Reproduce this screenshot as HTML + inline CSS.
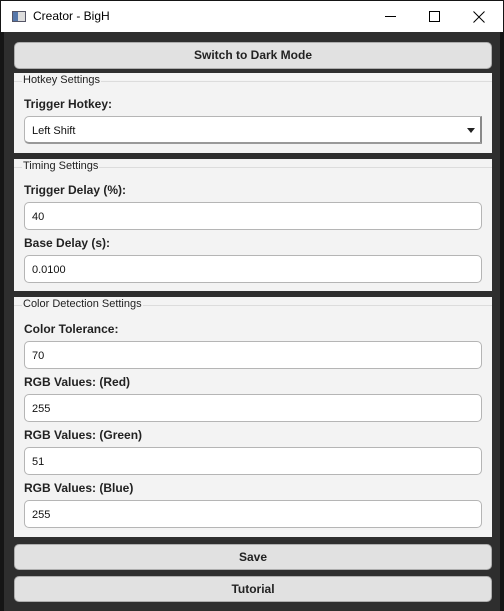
<!DOCTYPE html>
<html><head><style>
*{box-sizing:border-box;margin:0;padding:0}
body{width:504px;height:611px;background:#151515;position:relative;overflow:hidden;font-family:"Liberation Sans",sans-serif;font-size:12px;color:#000}
.tb{position:absolute;left:1px;top:1px;width:502px;height:31px;background:#fff}
.tb .t{position:absolute;left:32px;top:8px;font-size:12px;color:#000}
.ic{position:absolute;left:11px;top:10px;width:14px;height:11px;border:1px solid #556;background:linear-gradient(90deg,#57a 0 5px,#ddd 5px)}
.ct{position:absolute;left:4px;top:32px;width:496px;height:579px;background:#2e2e2e}
.btn{position:absolute;left:14px;width:478px;background:#e1e1e1;border:1px solid #adadad;border-radius:5px;text-align:center;font-weight:bold;font-size:12px;color:#222}
.grp{position:absolute;left:14px;width:478px;background:#f3f3f3}
.gt{position:absolute;left:8px;font-size:11px;color:#222;background:#f3f3f3;padding:0 1px}
.gl{position:absolute;left:0;right:0;border-top:1px solid #dcdcdc}
.lb{position:absolute;left:24px;font-weight:bold;font-size:12px;color:#222}
.in{position:absolute;left:24px;width:458px;height:28px;background:#fff;border:1px solid #b5b5b5;border-radius:5px;padding:8px 0 0 7px;font-size:11px;color:#111}
</style></head><body>
<div class="tb"><div class="ic"></div><div class="t">Creator - BigH</div>
<div style="position:absolute;left:384px;top:15px;width:11px;border-top:1px solid #000"></div>
<div style="position:absolute;left:428px;top:10px;width:11px;height:11px;border:1px solid #000"></div>
<svg style="position:absolute;left:472px;top:10px" width="12" height="12"><path d="M0.5 0.5L11.5 11.5M11.5 0.5L0.5 11.5" stroke="#000" stroke-width="1"/></svg>
</div>
<div class="ct"></div>
<div class="btn" style="top:42px;height:27px;line-height:25px">Switch to Dark Mode</div>

<div class="grp" style="top:73px;height:80px"><div class="gl" style="top:8px"></div><div class="gt" style="top:1px">Hotkey Settings</div></div>
<div class="lb" style="top:97px">Trigger Hotkey:</div>
<div class="in" style="top:116px;border-radius:5px 0 0 5px;border-right:2px solid #888;border-bottom:2px solid #999">Left Shift
<svg style="position:absolute;right:5px;top:11px" width="8" height="5"><path d="M0 0H8L4 5Z" fill="#222"/></svg></div>

<div class="grp" style="top:159px;height:132px"><div class="gl" style="top:8px"></div><div class="gt" style="top:1px">Timing Settings</div></div>
<div class="lb" style="top:183px">Trigger Delay (%):</div>
<div class="in" style="top:202px">40</div>
<div class="lb" style="top:236px">Base Delay (s):</div>
<div class="in" style="top:255px">0.0100</div>

<div class="grp" style="top:297px;height:240px"><div class="gl" style="top:8px"></div><div class="gt" style="top:1px">Color Detection Settings</div></div>
<div class="lb" style="top:322px">Color Tolerance:</div>
<div class="in" style="top:341px">70</div>
<div class="lb" style="top:375px">RGB Values: (Red)</div>
<div class="in" style="top:394px">255</div>
<div class="lb" style="top:428px">RGB Values: (Green)</div>
<div class="in" style="top:447px">51</div>
<div class="lb" style="top:481px">RGB Values: (Blue)</div>
<div class="in" style="top:500px">255</div>

<div class="btn" style="top:544px;height:26px;line-height:24px">Save</div>
<div class="btn" style="top:576px;height:26px;line-height:24px">Tutorial</div>
</body></html>
